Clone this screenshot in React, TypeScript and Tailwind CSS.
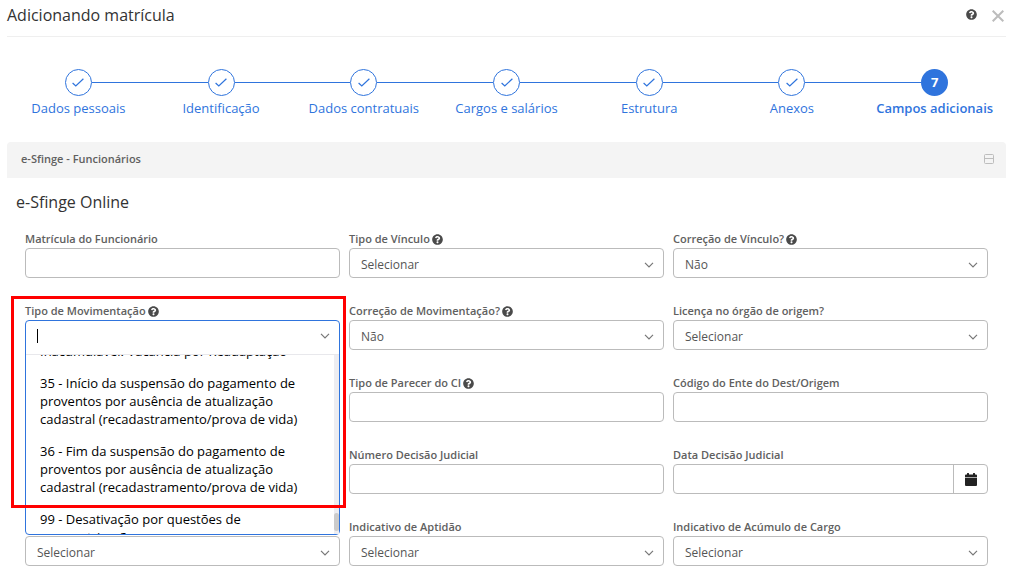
import { useId, useState } from "react";
import type { ReactNode } from "react";
import { FaQuestionCircle } from "react-icons/fa";

const steps = [
  "Dados pessoais",
  "Identificação",
  "Dados contratuais",
  "Cargos e salários",
  "Estrutura",
  "Anexos",
  "Campos adicionais",
];

const movimentacoes = [
  "Inacumulável: Vacância por Readaptação",
  "35 - Início da suspensão do pagamento de proventos por ausência de atualização cadastral (recadastramento/prova de vida)",
  "36 - Fim da suspensão do pagamento de proventos por ausência de atualização cadastral (recadastramento/prova de vida)",
  "99 - Desativação por questões de parametrização",
];

function Chevron() {
  return (
    <svg
      viewBox="0 0 10 6"
      className="pointer-events-none h-[6px] w-[10px] shrink-0"
      fill="none"
      stroke="#777"
      strokeWidth="1.2"
      aria-hidden="true"
    >
      <path d="M1 0.8 5 4.8 9 0.8" />
    </svg>
  );
}

function CalendarIcon() {
  return (
    <svg viewBox="0 0 12 13" className="h-[13px] w-3" fill="#222" aria-hidden="true">
      <path d="M2 1.5V0.5a0.5 0.5 0 0 1 0.5-0.5h1a0.5 0.5 0 0 1 0.5 0.5v1h4v-1a0.5 0.5 0 0 1 0.5-0.5h1a0.5 0.5 0 0 1 0.5 0.5v1h1a1 1 0 0 1 1 1V4H0V2.5a1 1 0 0 1 1-1Z" />
      <path d="M0 4h12v1H0z" fill="#aaa" />
      <path d="M0 5h12v7a1 1 0 0 1-1 1H1a1 1 0 0 1-1-1Z" />
    </svg>
  );
}

function Label({ id, text, help }: { id: string; text: string; help?: boolean }) {
  return (
    <label
      htmlFor={id}
      className="flex h-[18px] items-center gap-[2px] text-[11px] leading-[18px] font-semibold text-[#606060]"
    >
      {text}
      {help && <FaQuestionCircle className="size-[11px] text-[#4a4a4a]" aria-hidden="true" />}
    </label>
  );
}

function TextField({ label, help, button }: { label: string; help?: boolean; button?: ReactNode }) {
  const id = useId();
  return (
    <div>
      <Label id={id} text={label} help={help} />
      <div className="flex h-[30px] rounded border border-[#bbb] bg-white">
        <input id={id} type="text" className="min-w-0 flex-1 rounded px-[11px] text-[13px] outline-none" />
        {button}
      </div>
    </div>
  );
}

function SelectBox({ id, value, label }: { id: string; value: string; label?: string }) {
  return (
    <div className="grid h-[30px] items-center rounded border border-[#bbb] bg-white">
      <select
        id={id}
        aria-label={label}
        defaultValue={value}
        className="col-start-1 row-start-1 h-7 w-full appearance-none rounded bg-transparent px-[11px] pt-1 text-[12px] text-[#555] outline-none"
      >
        <option>Selecionar</option>
        <option>Sim</option>
        <option>Não</option>
      </select>
      <span className="pointer-events-none col-start-1 row-start-1 flex pt-[3px] pr-[9px] justify-self-end">
        <Chevron />
      </span>
    </div>
  );
}

function SelectField({ label, help, value = "Selecionar" }: { label: string; help?: boolean; value?: string }) {
  const id = useId();
  return (
    <div>
      <Label id={id} text={label} help={help} />
      <SelectBox id={id} value={value} />
    </div>
  );
}

function MovimentacaoField() {
  const id = useId();
  const [query, setQuery] = useState("");
  return (
    <div className="relative">
      <Label id={id} text="Tipo de Movimentação" help />
      <div className="absolute inset-x-0 top-[18px] z-10 rounded border border-[#2f74dd] bg-white">
        <div className="flex h-[34px] items-center border-b border-[#e8e8ec] pr-[9px] pb-[3px] pl-[11px]">
          <span className="h-[14px] w-px bg-black" />
          <input
            id={id}
            type="text"
            role="combobox"
            aria-expanded="true"
            aria-controls={`${id}-list`}
            value={query}
            onChange={(e) => setQuery(e.target.value)}
            className="min-w-0 flex-1 text-[13px] outline-none"
          />
          <Chevron />
        </div>
        <div className="flex h-[179px] overflow-hidden">
          <ul id={`${id}-list`} role="listbox" className="-mt-5 flex-1 pr-7 pl-[14px]">
            {movimentacoes.map((item) => (
              <li key={item} role="option" aria-selected="false" className="py-[7px] text-[13px] leading-[18px] text-black">
                {item}
              </li>
            ))}
          </ul>
          <div className="flex w-[5px] flex-col justify-end bg-[#ededf1] pb-[3px]">
            <div className="h-[18px] rounded-full bg-[#cbcbcb]" />
          </div>
        </div>
      </div>
      <div className="pointer-events-none absolute -top-[6px] -right-[6px] -left-[14px] z-20 h-[212px] border-3 border-[#f00]" />
    </div>
  );
}

export default function App() {
  return (
    <main className="min-h-screen bg-white px-[7px] pr-[9px] pb-3 font-['Open_Sans','Noto_Sans',sans-serif] text-[#333]">
      <header className="flex h-[37px] items-start border-b border-[#efefef] pt-1">
        <h1 className="flex-1 text-[16px] leading-[22px]">Adicionando matrícula</h1>
        <button type="button" aria-label="Ajuda" className="mt-[5px] mr-[15px] text-[#4a4a4a]">
          <FaQuestionCircle className="size-[11px]" />
        </button>
        <button type="button" aria-label="Fechar" className="mt-[6px] mr-[2px]">
          <svg viewBox="0 0 12 12" className="size-3" fill="none" stroke="#bcbcbc" strokeWidth="2">
            <path d="M0.7 0.7 11.3 11.3M11.3 0.7 0.7 11.3" />
          </svg>
        </button>
      </header>

      <ol className="mt-8 grid grid-cols-7 text-[13px] leading-[18px] text-[#2f74dd]">
        {steps.map((step, i) => {
          const current = i === steps.length - 1;
          return (
            <li key={step} className="flex flex-col items-center" aria-current={current ? "step" : undefined}>
              <div className="flex w-full items-center">
                <span className={i === 0 ? "h-px flex-1" : "h-px flex-1 bg-[#2f74dd]"} />
                {current ? (
                  <span className="flex size-[27px] items-center justify-center rounded-full bg-[#2f74dd] pb-[2px] font-bold text-white">
                    {i + 1}
                  </span>
                ) : (
                  <span className="flex size-[27px] items-center justify-center rounded-full border border-[#2f74dd]">
                    <svg viewBox="0 0 12 9" className="h-[9px] w-3" fill="none" stroke="#2f74dd" strokeWidth="1.2">
                      <path d="M0.6 5 3.8 8 11.4 0.7" />
                    </svg>
                  </span>
                )}
                <span className={current ? "h-px flex-1" : "h-px flex-1 bg-[#2f74dd]"} />
              </div>
              <span className={current ? "mt-[3px] font-semibold whitespace-nowrap" : "mt-[3px] whitespace-nowrap"}>
                {step}
              </span>
            </li>
          );
        })}
      </ol>

      <section>
        <div className="mt-[25px] flex h-9 items-center justify-between rounded-t bg-[#f4f4f4] pr-[11px] pb-[2px] pl-[14px]">
          <h2 className="text-[11px] leading-[18px] font-semibold text-[#606060]">e-Sfinge - Funcionários</h2>
          <button type="button" aria-label="Recolher seção">
            <svg viewBox="0 0 12 12" className="size-3" fill="none" stroke="#bdbdbd">
              <rect x="1.5" y="1.5" width="9" height="9" rx="1" />
              <path d="M2 5.5h8" />
            </svg>
          </button>
        </div>

        <h3 className="mt-[13px] ml-[9px] text-[16px] leading-[22px]">e-Sfinge Online</h3>

        <form className="mt-[17px] grid grid-cols-3 gap-x-[9px] gap-y-6 px-[18px]">
          <TextField label="Matrícula do Funcionário" />
          <SelectField label="Tipo de Vínculo" help />
          <SelectField label="Correção de Vínculo?" help value="Não" />

          <MovimentacaoField />
          <SelectField label="Correção de Movimentação?" help value="Não" />
          <SelectField label="Licença no órgão de origem?" />

          <div className="col-start-2">
            <TextField label="Tipo de Parecer do CI" help />
          </div>
          <TextField label="Código do Ente do Dest/Origem" />

          <div className="col-start-2">
            <TextField label="Número Decisão Judicial" />
          </div>
          <TextField
            label="Data Decisão Judicial"
            button={
              <button
                type="button"
                aria-label="Abrir calendário"
                className="flex w-[34px] items-center justify-center border-l border-[#bbb]"
              >
                <CalendarIcon />
              </button>
            }
          />

          <div className="flex flex-col justify-end">
            <SelectBox id="indicativo" label="Indicativo" value="Selecionar" />
          </div>
          <SelectField label="Indicativo de Aptidão" />
          <SelectField label="Indicativo de Acúmulo de Cargo" />
        </form>
      </section>
    </main>
  );
}
